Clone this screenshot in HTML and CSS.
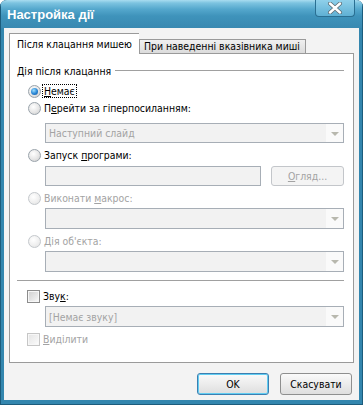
FILE: index.html
```html
<!DOCTYPE html>
<html lang="uk">
<head>
    <meta charset="UTF-8">
    <title>Настройка дії</title>
    <link rel="stylesheet" href="styles.css">
</head>
<body>
    <div class="window">
        <div class="titlebar">
            <span class="title">Настройка дії</span>
            <span class="close">
                <svg width="18" height="12" viewBox="0 0 18 12">
                    <path d="M4 1.5 L14 10.5 M14 1.5 L4 10.5" stroke="#5d6b73" stroke-width="4" stroke-linecap="round"/>
                    <path d="M4 1.5 L14 10.5 M14 1.5 L4 10.5" stroke="#ffffff" stroke-width="2.4" stroke-linecap="round"/>
                </svg>
            </span>
        </div>
        <div class="client">
            <div class="tabs">
                <div class="tab active">Після клацання мишею</div>
                <div class="tab">При наведенні вказівника миші</div>
            </div>
            <div class="panel">
                <div class="group-title"><span>Дія після клацання</span></div>

                <div class="option row-none">
                    <span class="radio checked"></span>
                    <span class="focus"><u>Н</u>емає</span>
                </div>
                <div class="option row-link">
                    <span class="radio"></span>
                    <span>П<u>е</u>рейти за гіперпосиланням:</span>
                </div>
                <div class="combo row-combo">
                    <span class="combo-text">Наступний слайд</span>
                    <span class="arrow"></span>
                </div>

                <div class="option row-option">
                    <span class="radio"></span>
                    <span>Запуск <u>п</u>рограми:</span>
                </div>
                <div class="input-row">
                    <span class="field"></span>
                    <span class="browse"><u>О</u>гляд...</span>
                </div>

                <div class="option row-option disabled">
                    <span class="radio"></span>
                    <span>Виконати <u>м</u>акрос:</span>
                </div>
                <div class="combo row-combo-tight">
                    <span class="combo-text"></span>
                    <span class="arrow"></span>
                </div>

                <div class="option row-option disabled">
                    <span class="radio"></span>
                    <span><u>Д</u>ія об'єкта:</span>
                </div>
                <div class="combo row-combo-tight">
                    <span class="combo-text"></span>
                    <span class="arrow"></span>
                </div>

                <div class="separator"></div>

                <div class="option row-sound">
                    <span class="check"></span>
                    <span>Зву<u>к</u>:</span>
                </div>
                <div class="combo row-combo-tight">
                    <span class="combo-text">[Немає звуку]</span>
                    <span class="arrow"></span>
                </div>

                <div class="option row-option row-select disabled">
                    <span class="check"></span>
                    <span><u>В</u>иділити</span>
                </div>
            </div>
            <div class="footer">
                <button class="btn default">OK</button>
                <button class="btn">Скасувати</button>
            </div>
        </div>
    </div>
</body>
</html>
```

FILE: styles.css
```css
body {
    margin: 0;
    background: #ffffff;
    font-family: "DejaVu Sans Condensed", "DejaVu Sans", sans-serif;
    font-size: 10.4px;
    color: #000;
}

.window {
    width: 363px;
    height: 405px;
    box-sizing: border-box;
    display: flex;
    flex-direction: column;
    background: #3386ae;
    border-radius: 7px 7px 0 0;
    box-shadow: inset 1px 0 0 #1c5c7c, inset -1px 0 0 #1c5c7c, inset 0 -1px 0 #1c5c7c;
    overflow: hidden;
}

.titlebar {
    height: 28px;
    flex-shrink: 0;
    display: flex;
    justify-content: space-between;
    align-items: flex-start;
    padding: 0 8px 0 7px;
    background: linear-gradient(#a9ddf0 0, #7cc3e0 3px, #55a8cd 9px, #3f93bb 16px, #3989b1 28px);
    box-shadow: inset 1px 0 0 #1c5c7c, inset -1px 0 0 #1c5c7c;
}

.title {
    margin-top: 7px;
    font-family: "Liberation Sans", Arial, sans-serif;
    font-size: 13px;
    font-weight: bold;
    color: #ffffff;
}

.close {
    width: 40px;
    height: 17px;
    box-sizing: border-box;
    display: flex;
    justify-content: center;
    align-items: center;
    border: 1px solid #2a6f92;
    border-top: none;
    border-radius: 0 0 4px 4px;
    background: linear-gradient(#8fd0ea, #5fb0d4);
}

.client {
    flex: 1;
    margin: 0 4px 5px 4px;
    background: #f3f3f3;
    padding: 5px 5px 0 5px;
    display: flex;
    flex-direction: column;
}

.tabs {
    display: flex;
    align-items: flex-end;
    height: 20px;
}

.tab {
    box-sizing: border-box;
    height: 14px;
    padding: 0 5px 0 4px;
    line-height: 13px;
    white-space: nowrap;
    background: linear-gradient(#f0f0f0, #dcdcdc);
    border: 1px solid #9a9a9a;
    border-bottom: none;
}

.tab.active {
    width: 130px;
    height: 21px;
    margin-bottom: -1px;
    padding: 4px 7px 0;
    background: #ffffff;
    position: relative;
    z-index: 1;
    border-right: none;
}

.panel {
    flex-shrink: 0;
    height: 310px;
    box-sizing: border-box;
    background: #ffffff;
    border: 1px solid #9a9a9a;
    padding: 0 9px 0 7px;
    display: flex;
    flex-direction: column;
}

.group-title {
    margin-top: 10px;
    height: 14px;
    display: flex;
    align-items: center;
    gap: 4px;
}

.group-title::after {
    content: "";
    flex: 1;
    height: 1px;
    margin-top: -1px;
    background: #a0a0a0;
}

.option {
    height: 14px;
    display: flex;
    align-items: center;
    gap: 3px;
    padding-left: 11px;
}

.row-none { margin-top: 6px; }
.row-link { margin-top: 3px; }
.row-option { margin-top: 5px; }
.row-sound { margin-top: 8px; padding-left: 10px; }
.row-select { padding-left: 10px; }

.disabled { color: #a3a3a3; }

.focus {
    outline: 1px dotted #000;
    padding: 0 1px;
    margin-left: -1px;
}

.radio {
    width: 13px;
    height: 13px;
    box-sizing: border-box;
    border-radius: 50%;
    border: 1px solid #9aa3ab;
    background: radial-gradient(circle at 40% 35%, #ffffff 0, #e6e6e6 55%, #c9c9c9 100%);
    display: flex;
    justify-content: center;
    align-items: center;
    flex-shrink: 0;
}

.disabled .radio {
    border-color: #c4c8cc;
    background: radial-gradient(circle at 40% 35%, #ffffff 0, #eeeeee 60%, #dddddd 100%);
}

.radio.checked::after {
    content: "";
    width: 7px;
    height: 7px;
    border-radius: 50%;
    background: radial-gradient(circle at 40% 35%, #9fe0ff 0, #2f8bd8 50%, #0b4f9a 100%);
}

.check {
    width: 13px;
    height: 13px;
    box-sizing: border-box;
    border: 1px solid #8c8c8c;
    background: linear-gradient(135deg, #cfcfcf, #ececec 70%, #ffffff);
    box-shadow: inset 0 0 0 1px #f7f7f7;
    flex-shrink: 0;
}

.disabled .check {
    border-color: #c6c6c6;
    background: linear-gradient(135deg, #e4e4e4, #f4f4f4 70%, #ffffff);
}

.combo {
    height: 21px;
    box-sizing: border-box;
    margin-left: 28px;
    display: flex;
    border: 1px solid #a7aeb6;
    background: #f2f2f2;
    color: #a3a3a3;
}

.row-combo { margin-top: 8px; height: 20px; }
.row-combo-tight { margin-top: 3px; }

.combo-text {
    flex: 1;
    padding-left: 3px;
    display: flex;
    align-items: center;
}

.arrow {
    width: 17px;
    background: #fafafa;
    display: flex;
    justify-content: center;
    align-items: center;
}

.arrow::after {
    content: "";
    border-left: 4px solid transparent;
    border-right: 4px solid transparent;
    border-top: 4px solid #b8b8ae;
    margin-top: 1px;
}

.input-row {
    margin: 4px 0 0 28px;
    height: 20px;
    display: flex;
    gap: 10px;
}

.field {
    width: 216px;
    box-sizing: border-box;
    border: 1px solid #a7aeb6;
    background: #f2f2f2;
}

.browse {
    width: 73px;
    box-sizing: border-box;
    border: 1px solid #c3c6ca;
    border-radius: 3px;
    background: #f4f4f4;
    color: #a3a3a3;
    display: flex;
    justify-content: center;
    align-items: center;
}

.separator {
    margin-top: 8px;
    height: 1px;
    background: #a0a0a0;
}

.footer {
    display: flex;
    justify-content: flex-end;
    gap: 11px;
    padding: 10px 2px 0 0;
}

.btn {
    width: 72px;
    height: 22px;
    box-sizing: border-box;
    font-family: "DejaVu Sans Condensed", "DejaVu Sans", sans-serif;
    font-size: 10.4px;
    color: #000;
    border: 1px solid #8e8f8f;
    border-radius: 3px;
    background: linear-gradient(#fafafa, #ececec 50%, #dedede);
    padding: 0;
}

.btn.default {
    border-color: #3c7fb1;
    box-shadow: inset 0 0 0 1px #61cdf2;
}
```
